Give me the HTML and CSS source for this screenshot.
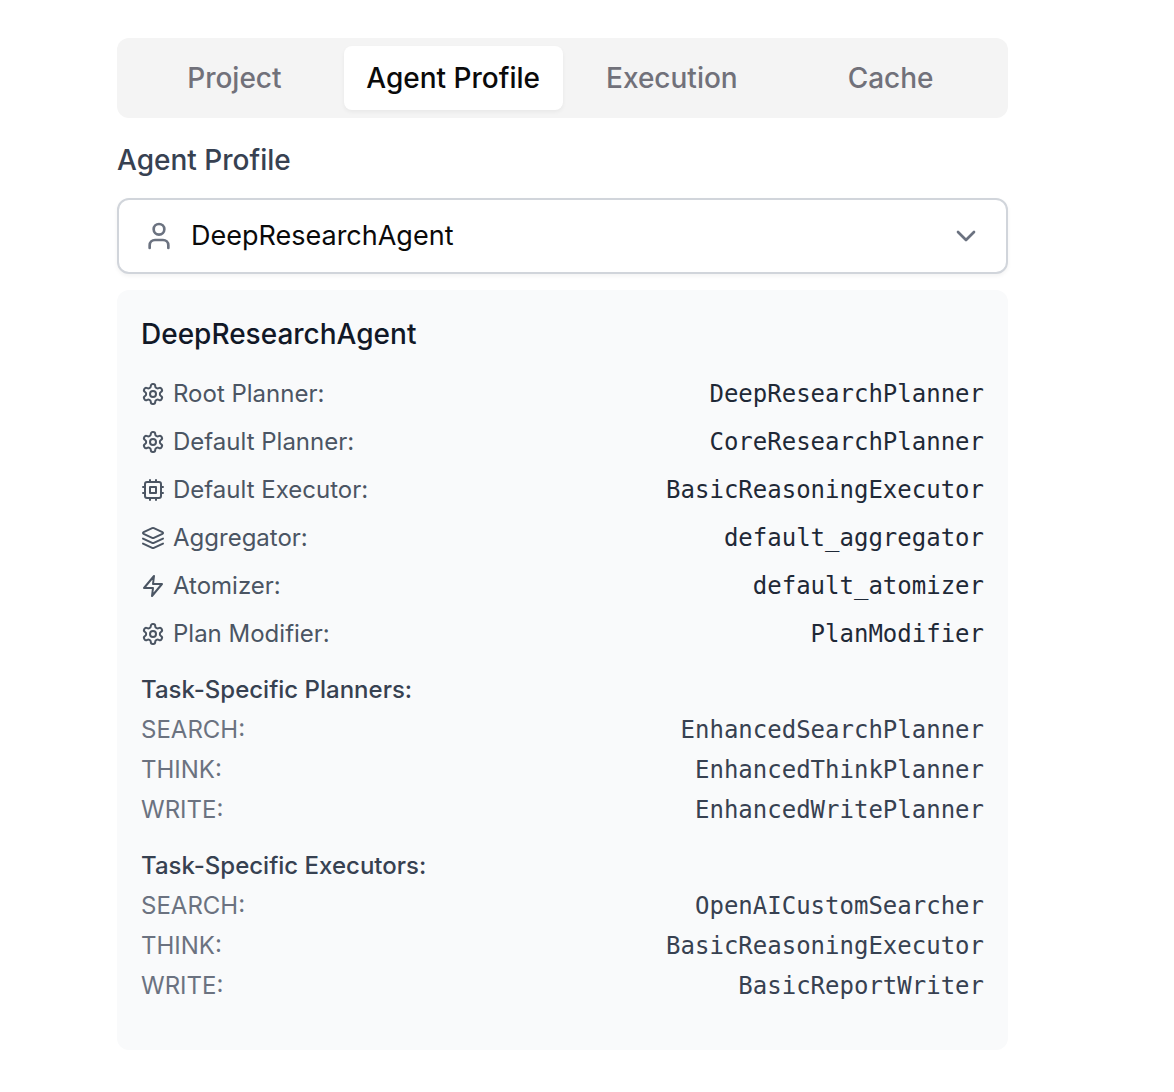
FILE: index.html
```html
<!DOCTYPE html>
<html lang="en">
<head>
<meta charset="utf-8">
<meta name="viewport" content="width=device-width, initial-scale=1">
<title>Agent Profile</title>
<link rel="stylesheet" href="styles.css">
</head>
<body>
<svg class="sprite" aria-hidden="true">
  <symbol id="settings" viewBox="0 0 24 24">
    <path d="M12.22 2h-.44a2 2 0 0 0-2 2v.18a2 2 0 0 1-1 1.73l-.43.25a2 2 0 0 1-2 0l-.15-.08a2 2 0 0 0-2.73.73l-.22.38a2 2 0 0 0 .73 2.73l.15.1a2 2 0 0 1 1 1.72v.51a2 2 0 0 1-1 1.74l-.15.09a2 2 0 0 0-.73 2.73l.22.38a2 2 0 0 0 2.73.73l.15-.08a2 2 0 0 1 2 0l.43.25a2 2 0 0 1 1 1.73V20a2 2 0 0 0 2 2h.44a2 2 0 0 0 2-2v-.18a2 2 0 0 1 1-1.73l.43-.25a2 2 0 0 1 2 0l.15.08a2 2 0 0 0 2.73-.73l.22-.39a2 2 0 0 0-.73-2.73l-.15-.08a2 2 0 0 1-1-1.74v-.5a2 2 0 0 1 1-1.74l.15-.09a2 2 0 0 0 .73-2.73l-.22-.38a2 2 0 0 0-2.73-.73l-.15.08a2 2 0 0 1-2 0l-.43-.25a2 2 0 0 1-1-1.73V4a2 2 0 0 0-2-2z"/>
    <circle cx="12" cy="12" r="3"/>
  </symbol>
  <symbol id="cpu" viewBox="0 0 24 24">
    <rect x="4" y="4" width="16" height="16" rx="2"/>
    <rect x="9" y="9" width="6" height="6"/>
    <path d="M15 2v2M15 20v2M2 15h2M2 9h2M20 15h2M20 9h2M9 2v2M9 20v2"/>
  </symbol>
  <symbol id="layers" viewBox="0 0 24 24">
    <path d="m12.83 2.18a2 2 0 0 0-1.66 0L2.6 6.08a1 1 0 0 0 0 1.83l8.58 3.91a2 2 0 0 0 1.66 0l8.58-3.9a1 1 0 0 0 0-1.83Z"/>
    <path d="m22 17.65-9.17 4.16a2 2 0 0 1-1.66 0L2 17.65"/>
    <path d="m22 12.65-9.17 4.16a2 2 0 0 1-1.66 0L2 12.65"/>
  </symbol>
  <symbol id="zap" viewBox="0 0 24 24">
    <path d="M13 2 3 14h9l-1 8 10-12h-9z"/>
  </symbol>
  <symbol id="user" viewBox="0 0 24 24">
    <path d="M19 21v-2a4 4 0 0 0-4-4H9a4 4 0 0 0-4 4v2"/>
    <circle cx="12" cy="7" r="4"/>
  </symbol>
  <symbol id="chevron" viewBox="0 0 24 24">
    <path d="m6 9 6 6 6-6"/>
  </symbol>
</svg>

<main class="page">
  <div class="tabs" role="tablist">
    <button class="tab" type="button" role="tab" aria-selected="false">Project</button>
    <button class="tab tab-active" type="button" role="tab" aria-selected="true">Agent Profile</button>
    <button class="tab" type="button" role="tab" aria-selected="false">Execution</button>
    <button class="tab" type="button" role="tab" aria-selected="false">Cache</button>
  </div>

  <label class="field-label" for="profile">Agent Profile</label>
  <div class="select-wrap">
    <select class="select" id="profile">
      <option>DeepResearchAgent</option>
    </select>
    <svg class="icon select-user" aria-hidden="true"><use href="#user"/></svg>
    <svg class="icon select-chevron" aria-hidden="true"><use href="#chevron"/></svg>
  </div>

  <section class="panel">
    <h2 class="panel-title">DeepResearchAgent</h2>
    <dl class="list">
      <div class="row"><dt class="term"><svg class="icon"><use href="#settings"/></svg>Root Planner:</dt><dd class="value">DeepResearchPlanner</dd></div>
      <div class="row"><dt class="term"><svg class="icon"><use href="#settings"/></svg>Default Planner:</dt><dd class="value">CoreResearchPlanner</dd></div>
      <div class="row"><dt class="term"><svg class="icon"><use href="#cpu"/></svg>Default Executor:</dt><dd class="value">BasicReasoningExecutor</dd></div>
      <div class="row"><dt class="term"><svg class="icon"><use href="#layers"/></svg>Aggregator:</dt><dd class="value">default_aggregator</dd></div>
      <div class="row"><dt class="term"><svg class="icon"><use href="#zap"/></svg>Atomizer:</dt><dd class="value">default_atomizer</dd></div>
      <div class="row"><dt class="term"><svg class="icon"><use href="#settings"/></svg>Plan Modifier:</dt><dd class="value">PlanModifier</dd></div>
    </dl>

    <h3 class="group-title">Task-Specific Planners:</h3>
    <dl class="list list-tight">
      <div class="row"><dt class="term">SEARCH:</dt><dd class="value">EnhancedSearchPlanner</dd></div>
      <div class="row"><dt class="term">THINK:</dt><dd class="value">EnhancedThinkPlanner</dd></div>
      <div class="row"><dt class="term">WRITE:</dt><dd class="value">EnhancedWritePlanner</dd></div>
    </dl>

    <h3 class="group-title">Task-Specific Executors:</h3>
    <dl class="list list-tight">
      <div class="row"><dt class="term">SEARCH:</dt><dd class="value">OpenAICustomSearcher</dd></div>
      <div class="row"><dt class="term">THINK:</dt><dd class="value">BasicReasoningExecutor</dd></div>
      <div class="row"><dt class="term">WRITE:</dt><dd class="value">BasicReportWriter</dd></div>
    </dl>
  </section>
</main>
</body>
</html>
```
FILE: styles.css
```css
* {
  box-sizing: border-box;
}

body {
  margin: 0;
  background: #fff;
  color: #0a0a0a;
  font-family: Inter, sans-serif;
  font-optical-sizing: none;
  font-size: 28px;
  line-height: 40px;
}

.sprite {
  display: none;
}

.icon {
  width: 24px;
  height: 24px;
  flex: none;
  fill: none;
  stroke: currentColor;
  stroke-width: 2;
  stroke-linecap: round;
  stroke-linejoin: round;
}

.page {
  padding: 38px 166px 42px 117px;
}

.tabs {
  display: grid;
  grid-template-columns: repeat(4, 1fr);
  padding: 8px;
  border-radius: 12px;
  background: #f4f4f4;
}

.tab {
  padding: 12px 0;
  border: 0;
  border-radius: 8px;
  background: none;
  color: #71717a;
  font: inherit;
  font-weight: 500;
  white-space: nowrap;
}

.tab-active {
  background: #fff;
  color: #0a0a0a;
  box-shadow: 0 2px 4px rgba(0, 0, 0, 0.05);
}

.field-label {
  display: block;
  margin: 22px 0 18px;
  color: #374151;
  font-weight: 500;
}

.select-wrap {
  position: relative;
}

.select {
  display: block;
  width: 100%;
  height: 76px;
  padding: 0 72px;
  border: 2px solid #d1d5db;
  border-radius: 12px;
  background: #fff;
  color: #0a0a0a;
  box-shadow: 0 2px 4px rgba(0, 0, 0, 0.05);
  font: inherit;
  font-size: 27px;
  appearance: none;
}

.select-user,
.select-chevron {
  position: absolute;
  top: 22px;
  width: 32px;
  height: 32px;
  color: #6b7280;
  pointer-events: none;
}

.select-user {
  left: 26px;
}

.select-chevron {
  right: 26px;
}

.panel {
  margin-top: 16px;
  padding: 24px 24px 48px;
  border-radius: 12px;
  background: #f9fafb;
  font-size: 24px;
  line-height: 32px;
}

.panel-title {
  margin: 0 0 24px;
  color: #111827;
  font-size: 28px;
  font-weight: 500;
  line-height: 40px;
}

.list {
  display: grid;
  gap: 16px;
  margin: 0;
  color: #1f2937;
}

.row {
  display: flex;
  justify-content: space-between;
}

.term {
  display: flex;
  align-items: center;
  gap: 8px;
  color: #4b5563;
}

.value {
  margin: 0;
  font-family: "DejaVu Sans Mono", monospace;
}

.group-title {
  margin: 24px 0 8px;
  color: #374151;
  font-size: 24px;
  font-weight: 500;
  line-height: 32px;
}

.list-tight {
  gap: 8px;
  color: #374151;
}

.list-tight .term {
  color: #6b7280;
}
```
